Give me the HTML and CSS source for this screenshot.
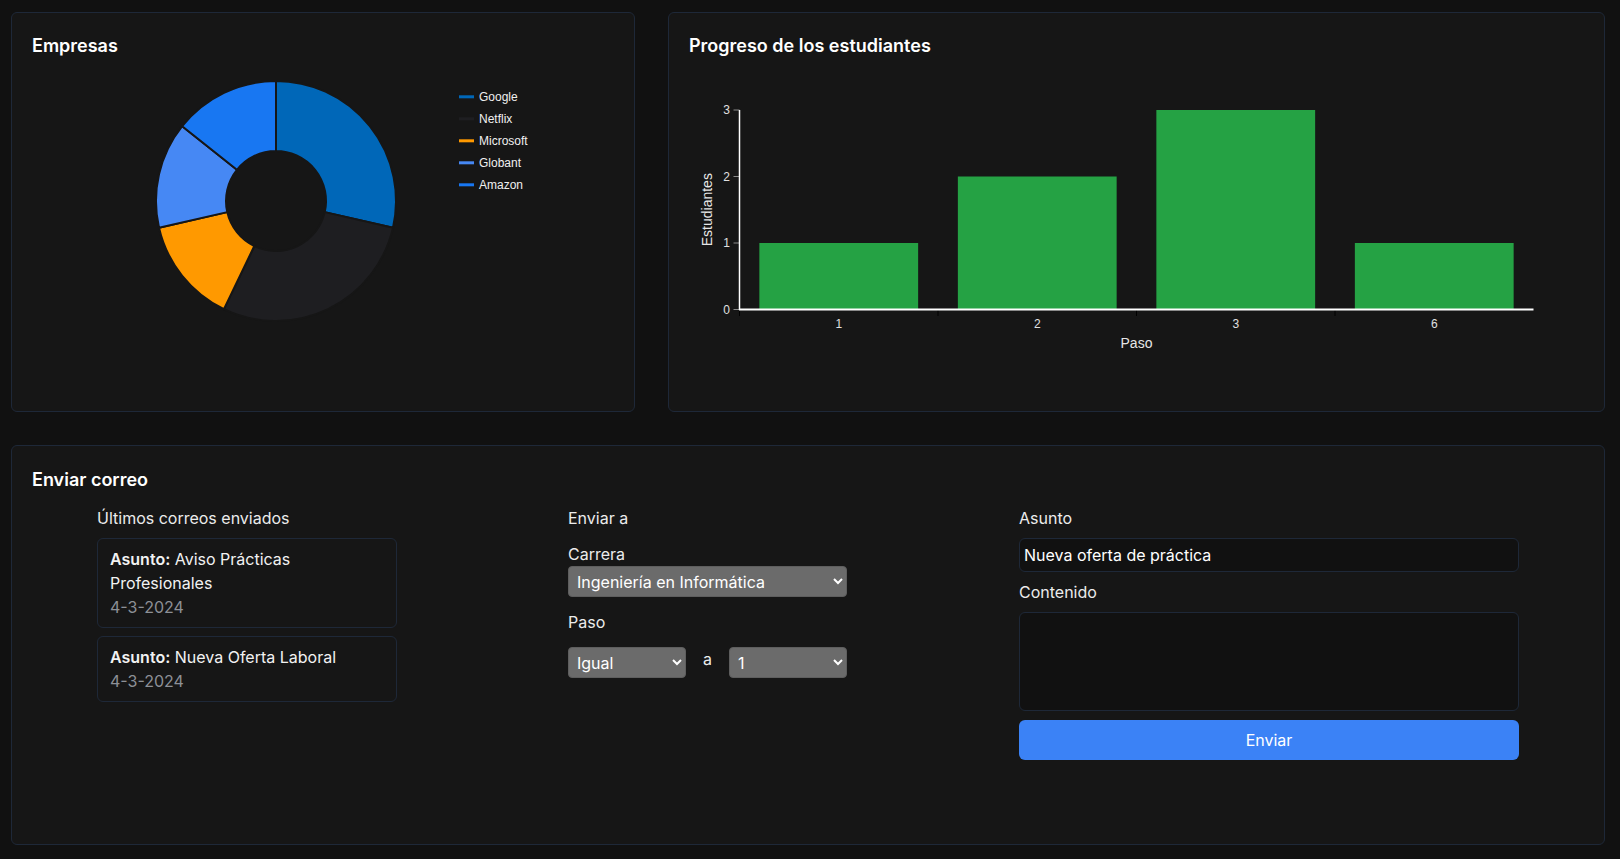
FILE: index.html
```html
<!DOCTYPE html>
<html lang="es">
<head>
<meta charset="utf-8">
<title>Panel</title>
<link rel="stylesheet" href="styles.css">
</head>
<body>
<div class="page">
  <section class="card">
    <h2 class="card-title">Empresas</h2>
    <svg class="chart" width="584" height="332" viewBox="0 0 584 332">
      <g class="donut" stroke="#161616" stroke-width="2" stroke-linejoin="round">
        <path fill="#0067b8" d="M244,21 A120,120 0 0 1 360.99,167.70 L292.75,152.13 A50,50 0 0 0 244,91 Z"/>
        <path fill="#1e1e21" d="M360.99,167.70 A120,120 0 0 1 191.93,249.12 L222.31,186.05 A50,50 0 0 0 292.75,152.13 Z"/>
        <path fill="#ff9900" d="M191.93,249.12 A120,120 0 0 1 127.01,167.70 L195.25,152.13 A50,50 0 0 0 222.31,186.05 Z"/>
        <path fill="#4688f4" d="M127.01,167.70 A120,120 0 0 1 150.18,66.18 L204.91,109.83 A50,50 0 0 0 195.25,152.13 Z"/>
        <path fill="#1877f2" d="M150.18,66.18 A120,120 0 0 1 244,21 L244,91 A50,50 0 0 0 204.91,109.83 Z"/>
      </g>
      <g class="legend">
        <rect x="427" y="35.3" width="15" height="3" fill="#0067b8"/>
        <text x="447" y="41">Google</text>
        <rect x="427" y="57.3" width="15" height="3" fill="#1e1e21"/>
        <text x="447" y="63">Netflix</text>
        <rect x="427" y="79.3" width="15" height="3" fill="#ff9900"/>
        <text x="447" y="85">Microsoft</text>
        <rect x="427" y="101.3" width="15" height="3" fill="#4688f4"/>
        <text x="447" y="107">Globant</text>
        <rect x="427" y="123.3" width="15" height="3" fill="#1877f2"/>
        <text x="447" y="129">Amazon</text>
      </g>
    </svg>
  </section>

  <section class="card">
    <h2 class="card-title">Progreso de los estudiantes</h2>
    <svg class="chart chart-bars" width="896" height="332" viewBox="0 0 896 332">
      <g class="bars" fill="#25a244">
        <rect x="71.35" y="183" width="158.8" height="66.5"/>
        <rect x="269.85" y="116.5" width="158.8" height="133"/>
        <rect x="468.35" y="50" width="158.8" height="199.5"/>
        <rect x="666.85" y="183" width="158.8" height="66.5"/>
      </g>
      <g class="ticks-y" stroke="#8a8a8a" stroke-width="1">
        <line x1="45.5" y1="249.5" x2="51.5" y2="249.5"/>
        <line x1="45.5" y1="183" x2="51.5" y2="183"/>
        <line x1="45.5" y1="116.5" x2="51.5" y2="116.5"/>
        <line x1="45.5" y1="50" x2="51.5" y2="50"/>
      </g>
      <g class="ticks-x" stroke="#000" stroke-width="1">
        <line x1="51.5" y1="249.5" x2="51.5" y2="256"/>
        <line x1="250" y1="249.5" x2="250" y2="256"/>
        <line x1="448.5" y1="249.5" x2="448.5" y2="256"/>
        <line x1="647" y1="249.5" x2="647" y2="256"/>
      </g>
      <line x1="51.5" y1="50" x2="51.5" y2="250" stroke="#fff" stroke-width="1.5"/>
      <line x1="51" y1="249.5" x2="845.5" y2="249.5" stroke="#fff" stroke-width="1.8"/>
      <g class="tick-label" text-anchor="end">
        <text x="42" y="253.5">0</text>
        <text x="42" y="187">1</text>
        <text x="42" y="120.5">2</text>
        <text x="42" y="54">3</text>
      </g>
      <g class="tick-label" text-anchor="middle">
        <text x="150.75" y="268">1</text>
        <text x="349.25" y="268">2</text>
        <text x="547.75" y="268">3</text>
        <text x="746.25" y="268">6</text>
      </g>
      <text class="axis-title" x="448.5" y="288" text-anchor="middle">Paso</text>
      <text class="axis-title" text-anchor="middle" transform="translate(23.5,149.7) rotate(-90)">Estudiantes</text>
    </svg>
  </section>

  <section class="card card-wide">
    <h2 class="card-title card-title-mail">Enviar correo</h2>
    <div class="mail-cols">
      <div class="col col-history">
        <p class="label label-gap">Últimos correos enviados</p>
        <div class="mail-item">
          <p class="mail-subject"><strong>Asunto:</strong> Aviso Prácticas Profesionales</p>
          <p class="mail-date">4-3-2024</p>
        </div>
        <div class="mail-item">
          <p class="mail-subject"><strong>Asunto:</strong> Nueva Oferta Laboral</p>
          <p class="mail-date">4-3-2024</p>
        </div>
      </div>

      <div class="col col-target">
        <p class="label label-gap-lg">Enviar a</p>
        <p class="label">Carrera</p>
        <select class="select select-full">
          <option>Ingeniería en Informática</option>
        </select>
        <p class="label label-step">Paso</p>
        <div class="step-row">
          <select class="select select-small">
            <option>Igual</option>
          </select>
          <span class="step-a">a</span>
          <select class="select select-small">
            <option>1</option>
          </select>
        </div>
      </div>

      <div class="col col-compose">
        <p class="label label-gap">Asunto</p>
        <input class="field field-input" type="text" value="Nueva oferta de práctica">
        <p class="label label-gap">Contenido</p>
        <textarea class="field field-area"></textarea>
        <button class="btn-send" type="button">Enviar</button>
      </div>
    </div>
  </section>
</div>
</body>
</html>
```

FILE: styles.css
```css
* {
  box-sizing: border-box;
}

html, body {
  margin: 0;
  padding: 0;
  background: #111111;
}

body {
  font-family: "Inter", "Liberation Sans", sans-serif;
  color: #ececec;
  font-size: 16px;
  line-height: 24px;
}

.page {
  display: grid;
  grid-template-columns: 624px 1fr;
  grid-template-rows: 400px 400px;
  column-gap: 33px;
  row-gap: 33px;
  padding: 12px 15px 14px 11px;
  height: 859px;
}

.card {
  background: #161616;
  border: 1px solid #1e2838;
  border-radius: 6px;
  padding: 19px 19px 19px 20px;
  overflow: hidden;
}

.card-wide {
  grid-column: 1 / 3;
}

.card-title {
  margin: 0;
  font-size: 18px;
  line-height: 28px;
  font-weight: 600;
  color: #ffffff;
}

.card-title-mail {
  margin-top: 1px;
  margin-bottom: 12px;
}

.chart {
  display: block;
}

.chart-bars {
  margin-left: -1px;
}

.legend text {
  font-family: "Liberation Sans", Arial, sans-serif;
  font-size: 12px;
  fill: #f0f0f0;
}

.tick-label text {
  font-family: "Liberation Sans", Arial, sans-serif;
  font-size: 12px;
  fill: #e0e0e0;
}

.axis-title {
  font-family: "Liberation Sans", Arial, sans-serif;
  font-size: 14px;
  fill: #e6e6e6;
}

.mail-cols {
  display: flex;
  align-items: flex-start;
  padding-left: 65px;
}

.col-history {
  width: 300px;
}

.col-target {
  width: 279px;
  margin-left: 171px;
}

.col-compose {
  width: 500px;
  margin-left: 172px;
}

.label {
  margin: 0;
  color: #ececec;
}

.label-gap {
  margin-bottom: 8px;
}

.label-gap-lg {
  margin-bottom: 12px;
}

.label-step {
  margin-top: 13px;
  margin-bottom: 13px;
}

.mail-item {
  border: 1px solid #1e2838;
  border-radius: 6px;
  padding: 8px 12px;
  margin-bottom: 8px;
}

.mail-subject {
  margin: 0;
  color: #f2f2f2;
}

.mail-subject strong {
  font-weight: 600;
}

.mail-date {
  margin: 0;
  color: #8d9096;
}

.select {
  font-family: "Inter", "Liberation Sans", sans-serif;
  font-size: 16px;
  color: #ffffff;
  background-color: #6b6b6b;
  border: 1px solid #5e5e5e;
  border-radius: 4px;
  height: 31px;
  padding: 0 4px 0 4px;
  color-scheme: dark;
  display: block;
}

.select-full {
  width: 279px;
}

.select-small {
  width: 118px;
}

.step-row {
  display: flex;
  align-items: flex-start;
}

.step-a {
  margin: 0 17px;
  line-height: 24px;
}

.field {
  display: block;
  width: 100%;
  font-family: "Inter", "Liberation Sans", sans-serif;
  font-size: 16px;
  line-height: 24px;
  color: #ffffff;
  background: #111111;
  border: 1px solid #1e2838;
  border-radius: 6px;
  outline: none;
}

.field-input {
  height: 34px;
  padding: 4px 4px;
  margin-bottom: 8px;
}

.field-area {
  height: 99px;
  padding: 4px;
  resize: none;
  margin-bottom: 9px;
}

.btn-send {
  display: block;
  width: 100%;
  height: 40px;
  border: none;
  border-radius: 6px;
  background: #3b82f6;
  color: #ffffff;
  font-family: "Inter", "Liberation Sans", sans-serif;
  font-size: 16px;
  line-height: 24px;
}
```
